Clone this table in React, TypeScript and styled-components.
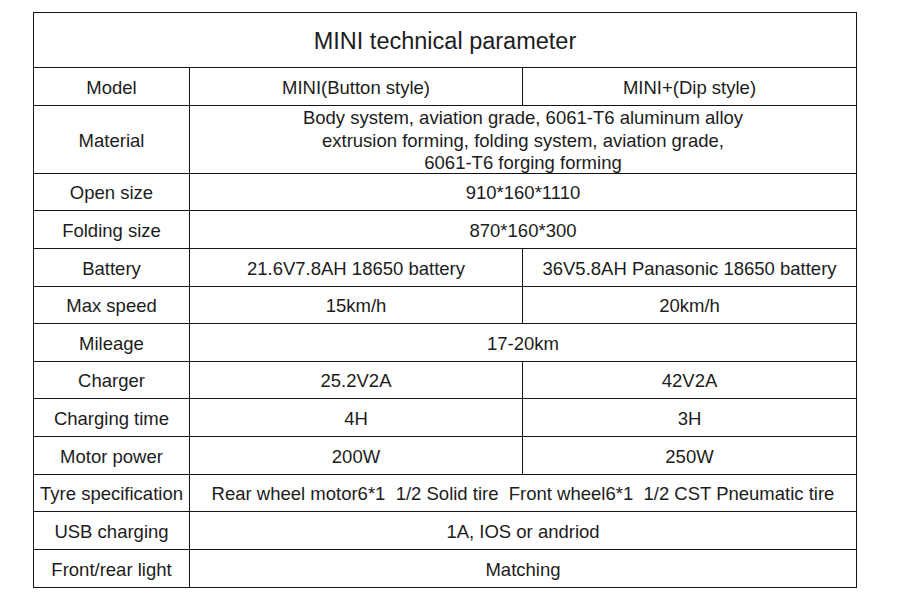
import React from "react";
import styled, { createGlobalStyle } from "styled-components";

const GlobalStyle = createGlobalStyle`
  html, body {
    margin: 0;
    padding: 0;
    background: #ffffff;
  }
  body {
    font-family: "Liberation Sans", Arial, sans-serif;
    color: #1c1c1c;
  }
`;

const Page = styled.div`
  width: 900px;
  height: 608px;
  padding: 12px 0 0 33px;
  box-sizing: border-box;
  background: #fff;
`;

const Table = styled.div<{ $rows: string }>`
  display: grid;
  grid-template-columns: 155px 332px 333px;
  grid-template-rows: ${(p) => p.$rows};
  gap: 1px;
  padding: 1px;
  width: 824px;
  box-sizing: border-box;
  background: #141414;
`;

const Cell = styled.div<{ $span?: number }>`
  grid-column: span ${(p) => p.$span ?? 1};
  background: #fff;
  display: flex;
  align-items: center;
  justify-content: center;
  text-align: center;
  font-size: 18.5px;
  line-height: 22.5px;
  padding-top: 3px;
  box-sizing: border-box;
  white-space: pre;
`;

const TitleCell = styled(Cell)`
  font-size: 23.5px;
  padding-top: 2px;
`;

type Row = { label: string; values: string[]; h: number };

const rows: Row[] = [
  { label: "Model", values: ["MINI(Button style)", "MINI+(Dip style)"], h: 37 },
  {
    label: "Material",
    values: [
      "Body system, aviation grade, 6061-T6 aluminum alloy\nextrusion forming, folding system, aviation grade,\n6061-T6 forging forming",
    ],
    h: 67,
  },
  { label: "Open size", values: ["910*160*1110"], h: 36 },
  { label: "Folding size", values: ["870*160*300"], h: 37 },
  { label: "Battery", values: ["21.6V7.8AH 18650 battery", "36V5.8AH Panasonic 18650 battery"], h: 37 },
  { label: "Max speed", values: ["15km/h", "20km/h"], h: 36 },
  { label: "Mileage", values: ["17-20km"], h: 37 },
  { label: "Charger", values: ["25.2V2A", "42V2A"], h: 36 },
  { label: "Charging time", values: ["4H", "3H"], h: 37 },
  { label: "Motor power", values: ["200W", "250W"], h: 37 },
  {
    label: "Tyre specification",
    values: ["Rear wheel motor6*1  1/2 Solid tire  Front wheel6*1  1/2 CST Pneumatic tire"],
    h: 36,
  },
  { label: "USB charging", values: ["1A, IOS or andriod"], h: 37 },
  { label: "Front/rear light", values: ["Matching"], h: 37 },
];

export default function App() {
  const template = ["54px", ...rows.map((r) => `${r.h}px`)].join(" ");
  return (
    <Page>
      <GlobalStyle />
      <Table $rows={template}>
        <TitleCell $span={3}>MINI technical parameter</TitleCell>
        {rows.map((r) => (
          <React.Fragment key={r.label}>
            <Cell>{r.label}</Cell>
            {r.values.map((v, i) => (
              <Cell key={i} $span={r.values.length === 1 ? 2 : 1}>
                {v}
              </Cell>
            ))}
          </React.Fragment>
        ))}
      </Table>
    </Page>
  );
}
